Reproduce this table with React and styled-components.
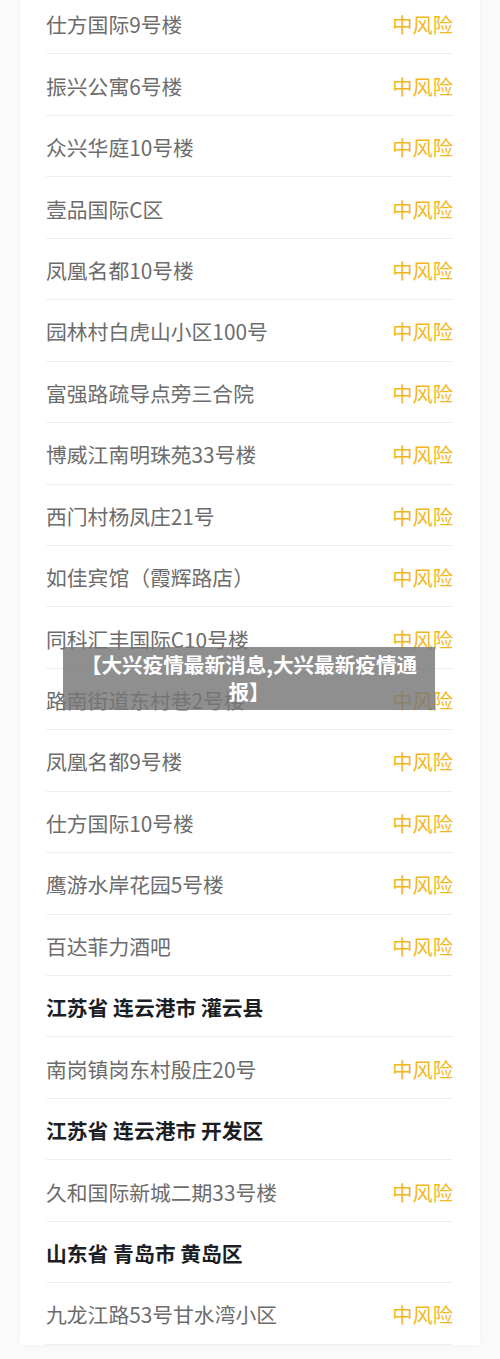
import React from 'react';
import styled, { createGlobalStyle } from 'styled-components';

const GlobalStyle = createGlobalStyle`
  html, body {
    margin: 0;
    padding: 0;
    background: #ffffff;
    overflow: hidden;
  }
  body {
    font-family: "Noto Sans CJK SC", "Noto Sans", sans-serif;
  }
`;

const Page = styled.div`
  position: relative;
  width: 500px;
  height: 1359px;
  overflow: hidden;
  background: #fafafa;
  padding: 0 20px;
  box-sizing: border-box;
`;

const Card = styled.div`
  margin-top: -7px;
  background: #ffffff;
  padding: 0 27px 0 26px;
  box-shadow: 0 0 6px rgba(0, 0, 0, 0.04);
`;

const Row = styled.div`
  display: flex;
  align-items: center;
  justify-content: space-between;
  height: 61.45px;
  box-sizing: border-box;
  border-bottom: 1px solid #efefef;
  padding-top: 2px;
`;

const Name = styled.span`
  font-size: 20.8px;
  color: ${p => (p.$head ? '#1b1e24' : '#6c6c6c')};
  font-weight: ${p => (p.$head ? 700 : 400)};
  white-space: nowrap;
`;

const Risk = styled.span`
  font-size: 20.3px;
  color: #f3b71e;
  white-space: nowrap;
`;

const Banner = styled.div`
  position: absolute;
  left: 63px;
  top: 647px;
  width: 372px;
  box-sizing: border-box;
  padding: 4px 10px 5px;
  background: rgba(118, 118, 118, 0.82);
  color: #ffffff;
  font-size: 20.6px;
  font-weight: 700;
  line-height: 27px;
  text-align: center;
`;

const rows = [
  ['仕方国际9号楼', true],
  ['振兴公寓6号楼', true],
  ['众兴华庭10号楼', true],
  ['壹品国际C区', true],
  ['凤凰名都10号楼', true],
  ['园林村白虎山小区100号', true],
  ['富强路疏导点旁三合院', true],
  ['博威江南明珠苑33号楼', true],
  ['西门村杨凤庄21号', true],
  ['如佳宾馆（霞辉路店）', true],
  ['同科汇丰国际C10号楼', true],
  ['路南街道东村巷2号楼', true],
  ['凤凰名都9号楼', true],
  ['仕方国际10号楼', true],
  ['鹰游水岸花园5号楼', true],
  ['百达菲力酒吧', true],
  ['江苏省 连云港市 灌云县', false],
  ['南岗镇岗东村殷庄20号', true],
  ['江苏省 连云港市 开发区', false],
  ['久和国际新城二期33号楼', true],
  ['山东省 青岛市 黄岛区', false],
  ['九龙江路53号甘水湾小区', true],
];

export default function App() {
  return (
    <Page>
      <GlobalStyle />
      <Card>
        {rows.map(([name, risk], i) => (
          <Row key={i}>
            <Name $head={!risk}>{name}</Name>
            {risk && <Risk>中风险</Risk>}
          </Row>
        ))}
      </Card>
      <Banner>【大兴疫情最新消息,大兴最新疫情通报】</Banner>
    </Page>
  );
}
